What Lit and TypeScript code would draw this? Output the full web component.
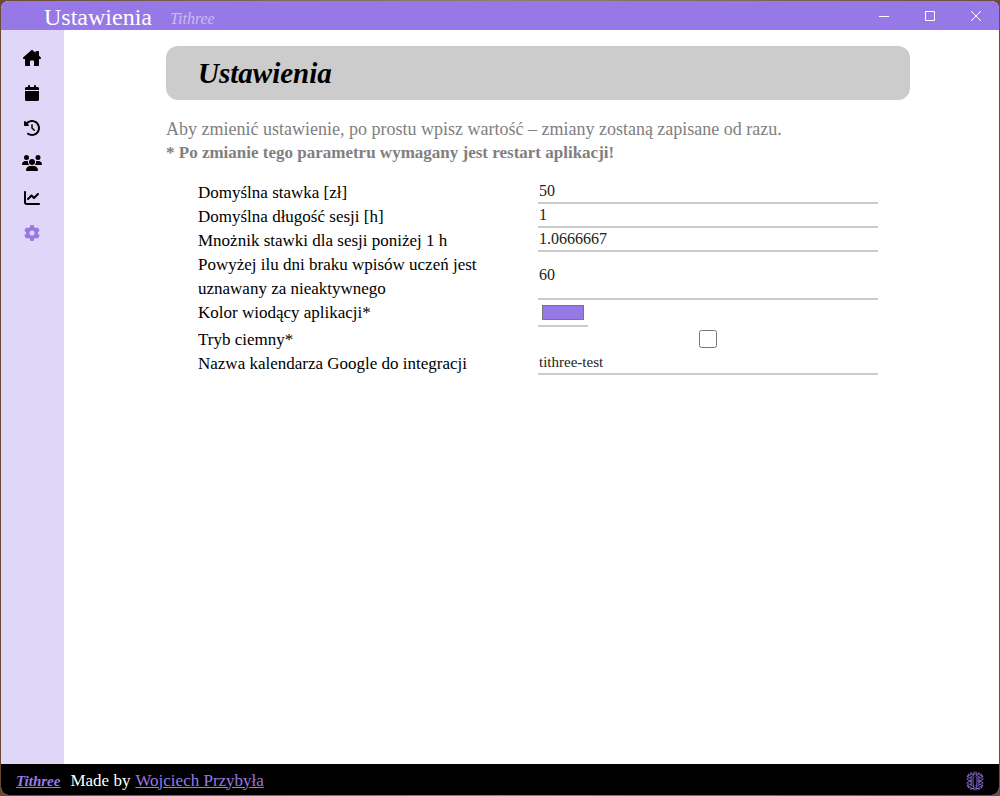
import { LitElement, html, css, svg, nothing } from "lit";
import { customElement, state } from "lit/decorators.js";

interface NavItem {
  label: string;
  viewBox: string;
  path: string;
  active?: boolean;
}

const NAV: NavItem[] = [
  {
    label: "Start",
    viewBox: "0 0 576 512",
    path: "M575.8 255.5c0 18-15 32.1-32 32.1h-32l.7 192.4c0 18-14 32-32 32H352V376c0-22-10-40-32-40h-64c-22 0-32 18-32 40v136H96c-18 0-32-14-32-32V287.600H32c-18 0-32-14-32-32.100 0-9 3-17 10-24L266.400 8c7-7 15-8 22-8s15 2 21 7L400 86V64c0-18 14-32 32-32h48c18 0 32 14 32 32v119l53 48c8 7 12 15 11 24.500z",
  },
  {
    label: "Kalendarz",
    viewBox: "0 0 448 512",
    path: "M96 32V64H48C21.500 64 0 85.500 0 112v48H448V112c0-26.500-21.500-48-48-48H352V32c0-17.700-14.300-32-32-32s-32 14.300-32 32V64H160V32c0-17.700-14.300-32-32-32S96 14.300 96 32zM448 192H0V464c0 26.500 21.500 48 48 48H400c26.500 0 48-21.500 48-48V192z",
  },
  {
    label: "Historia",
    viewBox: "0 0 512 512",
    path: "M75 75L41 41C25.900 25.900 0 36.600 0 57.900V168c0 13.300 10.700 24 24 24H134.100c21.400 0 32.100-25.900 17-41l-30.800-30.800C155 85.500 203 64 256 64c106 0 192 86 192 192s-86 192-192 192c-40.800 0-78.600-12.700-109.700-34.400-14.500-10.100-34.400-6.600-44.600 7.900s-6.600 34.400 7.900 44.600C151.200 495 201.700 512 256 512c141.400 0 256-114.600 256-256S397.400 0 256 0C185.300 0 121.300 28.700 75 75zm181 53c-13.300 0-24 10.700-24 24V256c0 6.400 2.500 12.500 7 17l72 72c9.400 9.400 24.600 9.400 33.900 0s9.400-24.600 0-33.900l-65-65V152c0-13.300-10.700-24-24-24z",
  },
  {
    label: "Uczniowie",
    viewBox: "0 0 640 512",
    path: "M144 0a80 80 0 1 1 0 160A80 80 0 1 1 144 0zM512 0a80 80 0 1 1 0 160A80 80 0 1 1 512 0zM0 298.700C0 239.800 47.800 192 106.700 192h42.700c15.900 0 31 3.500 44.600 9.700-1.300 7.200-1.900 14.700-1.900 22.300 0 38.200 16.800 72.500 43.300 96H21.300C9.600 320 0 310.400 0 298.700zM405.300 320h-.7c26.600-23.500 43.300-57.800 43.300-96 0-7.600-.7-15-1.900-22.300 13.600-6.300 28.700-9.700 44.600-9.700h42.700C592.200 192 640 239.800 640 298.700c0 11.800-9.600 21.300-21.300 21.300H405.300zM224 224a96 96 0 1 1 192 0 96 96 0 1 1-192 0zM128 485.300C128 411.700 187.700 352 261.300 352H378.700C452.300 352 512 411.700 512 485.300c0 14.700-11.900 26.700-26.700 26.700H154.700c-14.700 0-26.700-11.900-26.700-26.700z",
  },
  {
    label: "Statystyki",
    viewBox: "0 0 512 512",
    path: "M64 64c0-17.700-14.300-32-32-32S0 46.300 0 64V400c0 44.200 35.800 80 80 80H480c17.700 0 32-14.300 32-32s-14.300-32-32-32H80c-8.800 0-16-7.200-16-16V64zm406.600 86.600c12.500-12.500 12.500-32.800 0-45.300s-32.800-12.500-45.300 0L320 210.700l-57.400-57.400c-12.500-12.500-32.800-12.500-45.300 0l-112 112c-12.500 12.500-12.500 32.800 0 45.300s32.800 12.500 45.300 0L240 221.300l57.400 57.400c12.500 12.500 32.800 12.500 45.300 0l128-128z",
  },
  {
    label: "Ustawienia",
    viewBox: "0 0 512 512",
    active: true,
    path: "M495.900 166.600c3.200 8.700.5 18.400-6.400 24.600l-43.300 39.400c1.100 8.300 1.700 16.800 1.700 25.400s-.6 17.100-1.700 25.400l43.300 39.400c6.900 6.200 9.600 15.900 6.400 24.600-11 30-27 57-47 81-6 7-16 10-25 7l-56-18c-13 10-28 19-44 25l-12 57c-2 9-9 16-18 18-14 2-26 4-38 4s-24-2-38-4c-9-2-16-9-18-18l-12-57c-16-6-31-15-44-25l-56 18c-9 3-19 0-25-7-20-24-36-51-47-81-3-9-1-18 6-25l43-39c-1-8-1-17-1-25s0-17 1-25l-43-39c-7-6-9-16-6-25 11-30 27-57 47-81 6-7 16-10 25-7l56 18c13-10 28-19 44-25l12-57c2-9 9-16 18-18 14-2 26-4 38-4s24 2 38 4c9 2 16 9 18 18l12 57c16 6 31 15 44 25l56-18c9-3 19 0 25 7 20 24 36 51 47 81zM256 336a80 80 0 1 0 0-160 80 80 0 1 0 0 160z",
  },
];

interface Setting {
  id: string;
  label: string;
  kind: "number" | "text" | "color" | "checkbox";
  value?: string;
}

const SETTINGS: Setting[] = [
  { id: "rate", label: "Domyślna stawka [zł]", kind: "number", value: "50" },
  { id: "length", label: "Domyślna długość sesji [h]", kind: "number", value: "1" },
  { id: "factor", label: "Mnożnik stawki dla sesji poniżej 1 h", kind: "number", value: "1.0666667" },
  { id: "inactive", label: "Powyżej ilu dni braku wpisów uczeń jest uznawany za nieaktywnego", kind: "number", value: "60" },
  { id: "accent", label: "Kolor wiodący aplikacji*", kind: "color", value: "#9678e6" },
  { id: "dark", label: "Tryb ciemny*", kind: "checkbox" },
  { id: "calendar", label: "Nazwa kalendarza Google do integracji", kind: "text", value: "tithree-test" },
];

@customElement("app-root")
export class AppRoot extends LitElement {
  static styles = css`
    :host {
      --accent: #9678e6;
      --accent-soft: #e0d6f8;
      --line: #cccccc;
      display: block;
      min-height: 100vh;
      box-sizing: border-box;
      padding: 1px;
      background: linear-gradient(90deg, #6b4a35, #8d8078 50%, #6b4c44);
      color: #000;
      font: 17px/24px "Liberation Serif", serif;
    }
    * { box-sizing: border-box; }
    .window {
      display: grid;
      grid-template: auto 1fr auto / 63px 1fr;
      min-height: calc(100vh - 2px);
      border-radius: 8px;
      overflow: hidden;
      background: #fff;
    }
    .titlebar {
      grid-column: 1 / -1;
      display: flex;
      align-items: center;
      height: 29px;
      padding-left: 43px;
      background: var(--accent);
      color: #fff;
    }
    .title { padding-top: 2px; font-size: 24px; line-height: 28px; }
    .script { font-family: "Liberation Serif", serif; font-style: italic; }
    .subtitle {
      flex: 1;
      padding: 6px 0 0 18px;
      font-size: 16px;
      color: #cbbcf3;
    }
    button {
      width: 46px;
      height: 29px;
      padding: 0;
      border: 0;
      background: none;
      color: inherit;
    }
    button svg { display: block; margin: 0 auto; }
    .sidebar {
      display: flex;
      flex-direction: column;
      align-items: center;
      gap: 11px;
      padding: 16px 2px 0 0;
      background: var(--accent-soft);
    }
    .nav {
      display: grid;
      place-items: center;
      width: 33px;
      height: 24px;
      color: #000;
    }
    .nav svg { height: 16px; fill: currentColor; }
    .nav.active { color: var(--accent); }
    main { padding: 16px 89px 16px 102px; }
    h1 {
      margin: 0 0 17px;
      padding: 9px 32px;
      border-radius: 12px;
      background: var(--line);
      font-size: 29px;
      line-height: 36px;
      font-weight: bold;
    }
    p { margin: 0; color: #808080; }
    .intro { font-size: 18px; }
    .warn { font-weight: bold; }
    form {
      display: grid;
      grid-template-columns: 1fr 1fr;
      margin-top: 15px;
      padding: 0 32px;
    }
    label { align-self: start; padding: 1px 24px 0 0; margin-bottom: -1px; }
    input { margin: 0; font-family: inherit; color: #222; }
    .field {
      width: 100%;
      min-height: 24px;
      padding: 0 1px;
      border: 0;
      border-bottom: 2px solid var(--line);
      background: transparent;
      outline: none;
      appearance: textfield;
    }
    .number { font-size: 16px; }
    .text { font-size: 15px; }
    .color {
      width: 50px;
      height: 27px;
      padding: 1px 2px;
      border: 0;
      border-bottom: 2px solid var(--line);
      background: transparent;
    }
    .checkbox { width: 18px; height: 18px; margin: 3px; place-self: center; }
    footer {
      grid-column: 1 / -1;
      display: flex;
      align-items: center;
      height: 31px;
      padding: 2px 15px 0;
      background: #000;
      color: #fff;
    }
    footer a { color: var(--accent); }
    .logo { margin-right: 10px; font-size: 15px; font-weight: bold; }
    .author { margin-left: 5px; }
    .emblem { margin-left: auto; }
  `;

  @state() private accent = "#9678e6";

  private renderField(s: Setting) {
    if (s.kind === "color") {
      return html`<input class="color" id=${s.id} type="color" .value=${this.accent}
        @input=${(e: Event) => (this.accent = (e.target as HTMLInputElement).value)} />`;
    }
    if (s.kind === "checkbox") {
      return html`<input class="checkbox" id=${s.id} type="checkbox" />`;
    }
    return html`<input class="field ${s.kind}" id=${s.id} type=${s.kind}
      step=${s.kind === "number" ? "any" : nothing} .value=${s.value ?? ""} />`;
  }

  /** One half of the branching emblem; the other half is its mirror image. */
  private renderEmblemHalf(mirror: number) {
    return svg`<g transform="scale(${mirror} 1)">
      <path d="M1-9.500V-6L4-4V-1M1-4.500L2-3V3L1 5M4-9V-6.500L7-5V-2M6-7.500L8-4M4-4L6-3M8.500-2L5 0L8.500 2M3-1L5 0L3 1M7 2V5L4 6.500V9M6 7.500L8 4M4 1V4L1 6V9.500M4 4L6 3M1-7L4-7M1 7.500L4 7.500" />
    </g>`;
  }

  render() {
    return html`
      <div class="window">
        <header class="titlebar">
          <span class="title">Ustawienia</span>
          <span class="script subtitle">Tithree</span>
          <button aria-label="Minimalizuj">
            <svg width="10" height="10" stroke="currentColor"><path d="M0 5.500H10" /></svg>
          </button>
          <button aria-label="Maksymalizuj">
            <svg width="10" height="10" fill="none" stroke="currentColor"><path d="M.5.5h9v9h-9z" /></svg>
          </button>
          <button aria-label="Zamknij">
            <svg width="10" height="10" stroke="currentColor"><path d="M0 0L10 10M10 0L0 10" /></svg>
          </button>
        </header>
        <nav class="sidebar">
          ${NAV.map((n) => html`
            <a class="nav ${n.active ? "active" : ""}" href="#" aria-label=${n.label}>
              <svg viewBox=${n.viewBox}><path fill-rule="evenodd" d=${n.path} /></svg>
            </a>`)}
        </nav>
        <main>
          <h1 class="script">Ustawienia</h1>
          <p class="intro">Aby zmienić ustawienie, po prostu wpisz wartość – zmiany zostaną zapisane od razu.</p>
          <p class="warn">* Po zmianie tego parametru wymagany jest restart aplikacji!</p>
          <form>
            ${SETTINGS.map((s) => html`<label for=${s.id}>${s.label}</label>${this.renderField(s)}`)}
          </form>
        </main>
        <footer>
          <a class="script logo" href="#">Tithree</a>
          <span>Made by</span>
          <a class="author" href="#">Wojciech Przybyła</a>
          <svg class="emblem" width="18" height="20" viewBox="-9 -10 18 20" fill="none" stroke="#8468d0">
            ${this.renderEmblemHalf(1)}${this.renderEmblemHalf(-1)}
          </svg>
        </footer>
      </div>
    `;
  }
}
